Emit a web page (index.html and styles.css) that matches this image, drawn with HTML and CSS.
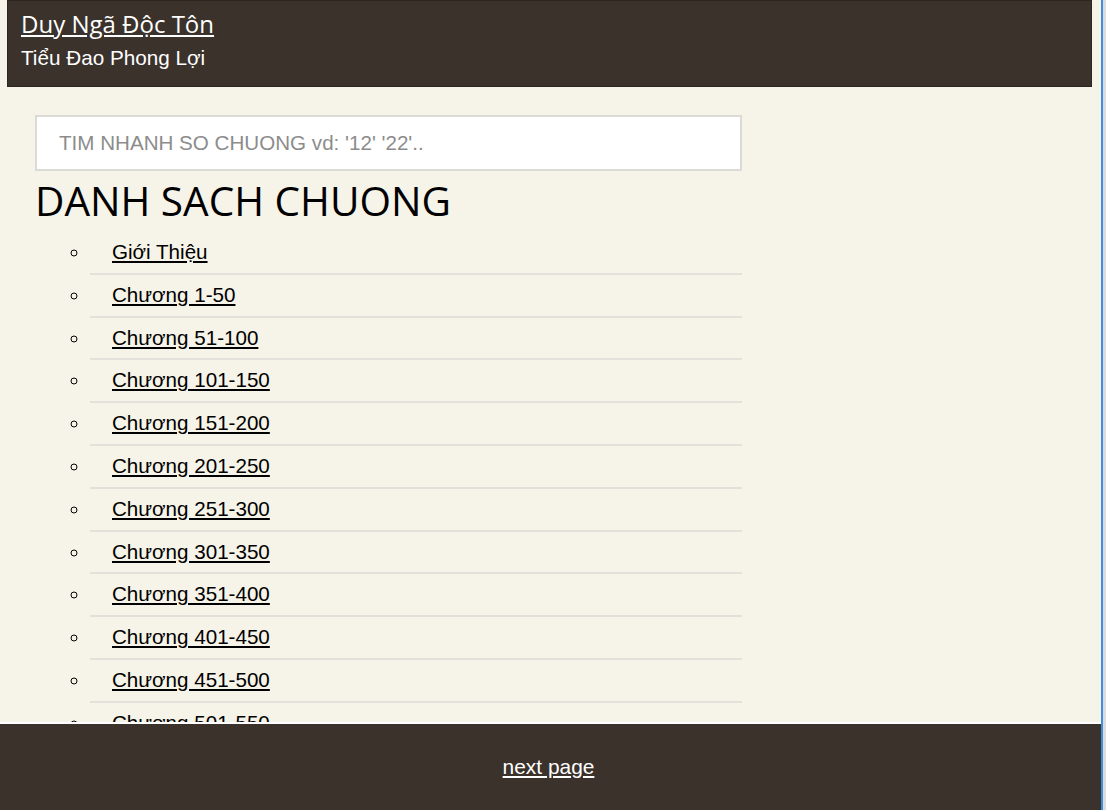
FILE: index.html
```html
<!DOCTYPE html>
<html lang="vi">
<head>
    <meta charset="UTF-8">
    <meta name="viewport" content="width=device-width, initial-scale=1.0">
    <title>Duy Ngã Độc Tôn</title>
    <link rel="stylesheet" href="styles.css">
</head>
<body>
    <div class="page">
        <header>
            <a href="#" class="title">Duy Ngã Độc Tôn</a>
            <div class="author">Tiểu Đao Phong Lợi</div>
        </header>
        <div class="content">
            <input type="text" class="search" placeholder="TIM NHANH SO CHUONG vd: '12' '22'..">
            <h1>DANH SACH CHUONG</h1>
            <ul class="chapters">
                <li><a href="#">Giới Thiệu</a></li>
                <li><a href="#">Chương 1-50</a></li>
                <li><a href="#">Chương 51-100</a></li>
                <li><a href="#">Chương 101-150</a></li>
                <li><a href="#">Chương 151-200</a></li>
                <li><a href="#">Chương 201-250</a></li>
                <li><a href="#">Chương 251-300</a></li>
                <li><a href="#">Chương 301-350</a></li>
                <li><a href="#">Chương 351-400</a></li>
                <li><a href="#">Chương 401-450</a></li>
                <li><a href="#">Chương 451-500</a></li>
                <li><a href="#">Chương 501-550</a></li>
                <li><a href="#">Chương 551-600</a></li>
                <li><a href="#">Chương 601-650</a></li>
                <li><a href="#">Chương 651-700</a></li>
            </ul>
        </div>
        <footer>
            <a href="#">next page</a>
        </footer>
    </div>
    <div class="frame-edge"></div>
</body>
</html>
```

FILE: styles.css
```css
html, body {
    margin: 0;
    padding: 0;
    background: #f6f3e8;
}
body {
    display: flex;
    font-family: "Liberation Sans", Arial, sans-serif;
}
.page {
    flex: 1;
    padding: 0 9px 0 7px;
}
.frame-edge {
    width: 5px;
    flex: none;
    border-left: 2px solid #3d8fe0;
    background: #dcdcdc;
    box-sizing: border-box;
}
header {
    background: #3b322c;
    border: 1px solid #2c2520;
    padding: 8px 13px 17px 13px;
    height: 60px;
}
header .title {
    color: #fff;
    font-family: "Open Sans", sans-serif;
    font-size: 24px;
    line-height: 30px;
}
header .author {
    color: #fff;
    font-size: 20.7px;
    line-height: 26px;
    margin-top: 6px;
}
.content {
    padding: 28px 0 100px 28px;
    width: 707px;
}
.search {
    display: block;
    width: 707px;
    height: 56px;
    box-sizing: border-box;
    border: 2px solid #dcdad5;
    background: #fff;
    padding: 0 22px;
    font-family: "Liberation Sans", Arial, sans-serif;
    font-size: 20.6px;
    outline: none;
}
.search::placeholder {
    color: #8c8c8c;
}
h1 {
    font-family: "Open Sans", sans-serif;
    font-weight: normal;
    font-size: 40.5px;
    line-height: 50px;
    margin: 5px 0 6px 0;
    color: #000;
}
.chapters {
    list-style: circle;
    margin: 0;
    padding: 0 0 0 55px;
}
.chapters li {
    padding: 9px 0 9px 22px;
    line-height: 22.8px;
    font-size: 20.6px;
    border-bottom: 2px solid #e3e1dc;
}
.chapters a {
    color: #000;
}
footer {
    position: fixed;
    left: 0;
    right: 5px;
    bottom: 0;
    height: 86px;
    background: #3b322c;
    border-top: 2px solid #fff;
    display: flex;
    align-items: center;
    justify-content: center;
    padding-right: 4px;
}
footer a {
    color: #fff;
    font-size: 20.9px;
}
```
